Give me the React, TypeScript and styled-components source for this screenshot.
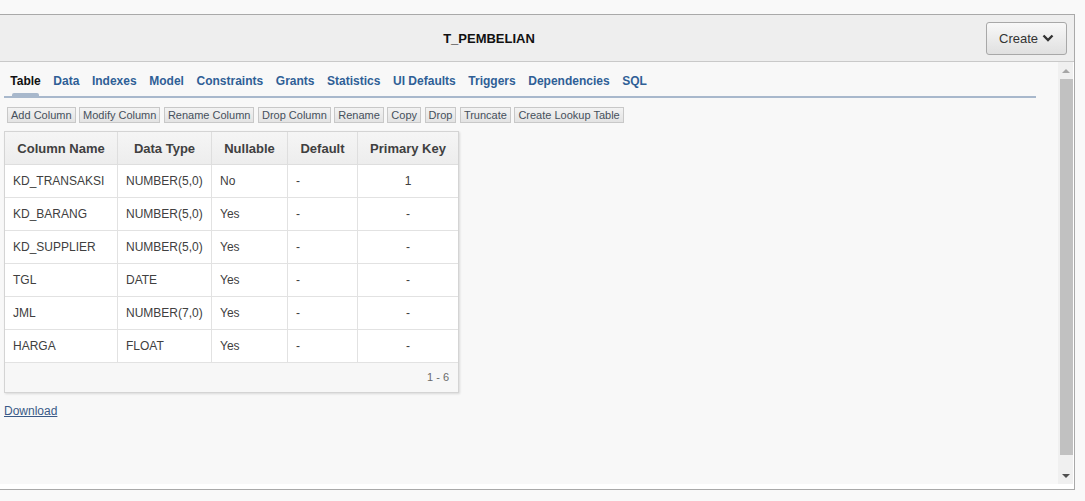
import React from 'react';
import styled, { createGlobalStyle, css } from 'styled-components';

const GlobalStyle = createGlobalStyle`
  html, body { margin: 0; padding: 0; background: #f9f9f9; }
  body {
    font-family: "Liberation Sans", Arial, sans-serif;
    width: 1085px;
    height: 501px;
    overflow: hidden;
  }
  * { box-sizing: border-box; }
`;

const Page = styled.div`
  padding-top: 14px;
`;

const Panel = styled.section`
  width: 1075px;
  background: #ffffff;
  border: 1px solid #a9a9a9;
  border-left: none;
  padding-bottom: 5px;
`;

const Header = styled.header`
  display: flex;
  align-items: center;
  gap: 8px;
  height: 47px;
  padding-right: 7px;
  background: #eeeeee;
  border-bottom: 1px solid #c9c9c9;
`;

const Title = styled.h1`
  flex: 1;
  margin: 0;
  text-align: center;
  font-size: 13px;
  font-weight: bold;
  color: #111111;
`;

const CreateButton = styled.button`
  display: flex;
  align-items: center;
  gap: 4px;
  width: 81px;
  height: 33px;
  padding: 0 0 0 12px;
  border: 1px solid #a8a8a8;
  border-radius: 3px;
  background: linear-gradient(#f8f8f8, #e0e0e0);
  font: 13px "Liberation Sans", Arial, sans-serif;
  color: #333333;
`;

const Body = styled.div`
  display: flex;
  height: 422px;
  margin-right: 1px;
`;

const Content = styled.div`
  flex: 1;
  background: #f8f8f8;
  overflow: hidden;
`;

const Scrollbar = styled.div`
  width: 15px;
  display: flex;
  flex-direction: column;
  background: #f0f0f0;
`;

const ScrollArrow = styled.div<{ $dir: 'up' | 'down' }>`
  height: 17px;
  display: flex;
  align-items: center;
  justify-content: center;
  padding-left: 1px;
  &::before {
    content: '';
    width: 0;
    height: 0;
    border-left: 4px solid transparent;
    border-right: 4px solid transparent;
    ${(p) =>
      p.$dir === 'up'
        ? css`border-bottom: 4px solid #a6a6a6;`
        : css`border-top: 4px solid #505050;`}
  }
`;

const ScrollThumb = styled.div`
  height: 376px;
  margin-left: 2px;
  background: #c1c1c1;
`;

const ScrollSpace = styled.div`
  flex: 1;
`;

const TabBar = styled.nav`
  display: flex;
  margin: 11px 22px 0 4px;
  border-bottom: 2px solid #a8b8cc;
`;

const Tab = styled.a<{ $active?: boolean }>`
  position: relative;
  padding: 0 6.3px 7px;
  font-size: 12px;
  font-weight: bold;
  line-height: 16px;
  text-decoration: none;
  color: ${(p) => (p.$active ? '#111111' : '#2f5f96')};
  ${(p) =>
    p.$active &&
    css`
      &::after {
        content: '';
        position: absolute;
        left: 8px;
        right: 8px;
        bottom: 0;
        height: 3px;
        background: #a8b8cc;
        border-radius: 2px 2px 0 0;
      }
    `}
`;

const ActionRow = styled.div`
  display: flex;
  gap: 3.5px;
  margin: 9px 0 0 7px;
`;

const ActionButton = styled.button`
  height: 16px;
  padding: 0 3px;
  border: 1px solid #c8c8c8;
  border-radius: 0;
  background: linear-gradient(#f3f3f3, #e3e3e3);
  font: 11px/14px "Liberation Sans", Arial, sans-serif;
  color: #46505c;
`;

const DataTable = styled.div`
  display: grid;
  grid-template-columns: 113px 94px 76px 70px 100px;
  width: 455px;
  margin: 8px 0 0 4px;
  border: 1px solid #d4d4d4;
  background: #ffffff;
  box-shadow: 1px 1px 2px rgba(0, 0, 0, 0.12);
`;

const HeadCell = styled.div<{ $last?: boolean }>`
  height: 33px;
  display: flex;
  align-items: center;
  justify-content: center;
  border-bottom: 1px solid #dedede;
  border-right: ${(p) => (p.$last ? 'none' : '1px solid #dedede')};
  background: linear-gradient(#f5f5f5, #ededed);
  font-size: 13px;
  font-weight: bold;
  color: #404040;
`;

const Cell = styled.div<{ $last?: boolean; $center?: boolean }>`
  height: 33px;
  display: flex;
  align-items: center;
  justify-content: ${(p) => (p.$center ? 'center' : 'flex-start')};
  padding: 0 8px;
  border-bottom: 1px solid #e2e2e2;
  border-right: ${(p) => (p.$last ? 'none' : '1px solid #e2e2e2')};
  font-size: 12px;
  color: #404040;
  white-space: nowrap;
`;

const TableFooter = styled.div`
  grid-column: 1 / -1;
  height: 29px;
  display: flex;
  align-items: center;
  justify-content: flex-end;
  padding: 0 9px 2px 0;
  background: #f7f7f7;
  font-size: 11px;
  color: #6a6a6a;
`;

const LinkRow = styled.div`
  margin: 8px 0 0 4px;
`;

const DownloadLink = styled.a`
  font-size: 12px;
  line-height: 16px;
  color: #3a5a87;
  text-decoration: underline;
`;

const Chevron = () => (
  <svg width="12" height="8" viewBox="0 0 12 8" aria-hidden="true">
    <polyline points="1.5,1.5 6,6 10.5,1.5" fill="none" stroke="#333" strokeWidth="2.4" strokeLinecap="butt" strokeLinejoin="miter" />
  </svg>
);

const tabs = ['Table', 'Data', 'Indexes', 'Model', 'Constraints', 'Grants', 'Statistics', 'UI Defaults', 'Triggers', 'Dependencies', 'SQL'];
const actions = ['Add Column', 'Modify Column', 'Rename Column', 'Drop Column', 'Rename', 'Copy', 'Drop', 'Truncate', 'Create Lookup Table'];
const headers = ['Column Name', 'Data Type', 'Nullable', 'Default', 'Primary Key'];
const rows = [
  ['KD_TRANSAKSI', 'NUMBER(5,0)', 'No', '-', '1'],
  ['KD_BARANG', 'NUMBER(5,0)', 'Yes', '-', '-'],
  ['KD_SUPPLIER', 'NUMBER(5,0)', 'Yes', '-', '-'],
  ['TGL', 'DATE', 'Yes', '-', '-'],
  ['JML', 'NUMBER(7,0)', 'Yes', '-', '-'],
  ['HARGA', 'FLOAT', 'Yes', '-', '-'],
];

export default function App() {
  return (
    <>
      <GlobalStyle />
      <Page>
        <Panel>
          <Header>
            <Title>T_PEMBELIAN</Title>
            <CreateButton>
              Create <Chevron />
            </CreateButton>
          </Header>
          <Body>
            <Content>
              <TabBar>
                {tabs.map((t, i) => (
                  <Tab key={t} $active={i === 0}>
                    {t}
                  </Tab>
                ))}
              </TabBar>
              <ActionRow>
                {actions.map((a) => (
                  <ActionButton key={a}>{a}</ActionButton>
                ))}
              </ActionRow>
              <DataTable>
                {headers.map((h, i) => (
                  <HeadCell key={h} $last={i === headers.length - 1}>
                    {h}
                  </HeadCell>
                ))}
                {rows.map((r) =>
                  r.map((v, i) => (
                    <Cell key={r[0] + i} $last={i === r.length - 1} $center={i === r.length - 1}>
                      {v}
                    </Cell>
                  ))
                )}
                <TableFooter>1 - 6</TableFooter>
              </DataTable>
              <LinkRow>
                <DownloadLink href="#">Download</DownloadLink>
              </LinkRow>
            </Content>
            <Scrollbar>
              <ScrollArrow $dir="up" />
              <ScrollThumb />
              <ScrollSpace />
              <ScrollArrow $dir="down" />
            </Scrollbar>
          </Body>
        </Panel>
      </Page>
    </>
  );
}
